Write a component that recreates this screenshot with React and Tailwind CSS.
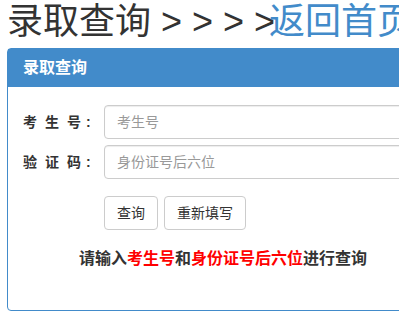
import React from "react";

const font = {
  fontFamily: '"Liberation Sans", "Noto Sans CJK SC", sans-serif',
};

const Field = ({ label, placeholder }) => (
  <div className="flex items-center h-[34px]">
    <label className="w-[81px] text-[14px] font-bold text-[#333] whitespace-nowrap">
      <span className="tracking-[8px]">{label.slice(0, 2)}</span>
      <span>{label.slice(2)}</span>
      <span className="ml-[5px]">:</span>
    </label>
    <input
      type="text"
      placeholder={placeholder}
      className="w-[400px] h-[34px] px-3 text-[14px] text-[#555] border border-[#ccc] rounded shadow-[inset_0_1px_1px_rgba(0,0,0,0.075)] placeholder:text-[#999] outline-none"
    />
  </div>
);

const App = () => {
  return (
    <div className="w-[399px] h-[324px] overflow-hidden bg-white" style={font}>
      <div className="w-[640px] pl-[7px]">
        {/* Title */}
        <h1 className="pt-[2px] text-[36px] leading-[40px] text-[#333] whitespace-nowrap">
          录取查询 &gt; &gt; &gt; &gt;
          <a href="#" className="-ml-[6px] text-[#428bca]">
            返回首页
          </a>
        </h1>

        {/* Panel */}
        <div className="mt-[6px] border border-[#428bca] rounded">
          <div className="h-[38px] px-[15px] flex items-center bg-[#428bca] text-white text-[16px] font-bold">
            录取查询
          </div>
          <div className="pt-[18px] pl-[15px] pb-[41px]">
            <div className="flex flex-col gap-[6px]">
              <Field label="考生号" placeholder="考生号" />
              <Field label="验证码" placeholder="身份证号后六位" />
            </div>

            <div className="mt-[17px] pl-[81px] flex gap-[6px]">
              <button className="h-[34px] px-3 text-[14px] text-[#333] bg-white border border-[#ccc] rounded">
                查询
              </button>
              <button className="h-[34px] px-3 text-[14px] text-[#333] bg-white border border-[#ccc] rounded">
                重新填写
              </button>
            </div>

            <p className="mt-[19px] pl-[56px] text-[16px] leading-[20px] font-bold text-[#333]">
              请输入<span className="text-[#f00]">考生号</span>和
              <span className="text-[#f00]">身份证号后六位</span>进行查询
            </p>
          </div>
        </div>
      </div>
    </div>
  );
};

export default App;
